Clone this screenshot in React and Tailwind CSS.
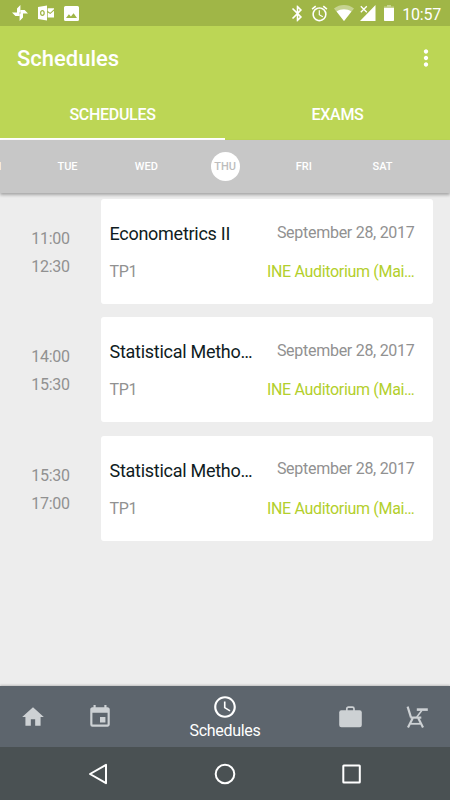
import React, { useState } from "react";
import {
  MdAccessTime,
  MdAlarm,
  MdBluetooth,
  MdEvent,
  MdHome,
  MdMoreVert,
} from "react-icons/md";

const days = ["MON", "TUE", "WED", "THU", "FRI", "SAT"];

const classes = [
  {
    id: 1,
    start: "11:00",
    end: "12:30",
    name: "Econometrics II",
    date: "September 28, 2017",
    type: "TP1",
    room: "INE Auditorium (Mai…",
  },
  {
    id: 2,
    start: "14:00",
    end: "15:30",
    name: "Statistical Metho…",
    date: "September 28, 2017",
    type: "TP1",
    room: "INE Auditorium (Mai…",
  },
  {
    id: 3,
    start: "15:30",
    end: "17:00",
    name: "Statistical Metho…",
    date: "September 28, 2017",
    type: "TP1",
    room: "INE Auditorium (Mai…",
  },
];

function PinwheelIcon() {
  return (
    <svg width="16" height="16" viewBox="0 0 16 16" fill="currentColor">
      <path d="M8.400 0v7.400H5V3.400zM16 8.400H8.600V5h4zM7.600 16V8.600H11v4zM0 7.600h7.400V11h-4z" />
    </svg>
  );
}

function OutlookIcon() {
  return (
    <svg width="16" height="16" viewBox="0 0 16 16" fill="currentColor">
      <path
        fillRule="evenodd"
        d="M0 1.900L9 .4v15.200L0 14.100zM4.400 4.900C2.900 4.900 2 6.200 2 8s.9 3.100 2.400 3.100S6.800 9.800 6.800 8 5.900 4.900 4.400 4.900zm0 1.400c.7 0 1.100.7 1.100 1.700s-.4 1.700-1.100 1.700S3.300 9 3.300 8s.4-1.700 1.100-1.700z"
      />
      <path d="M9.700 3.300H16v1l-3.800 3.500-2.500-1.700zM9.700 7.400l2.600 1.700L16 5.800v6.700H9.700z" />
    </svg>
  );
}

function PictureIcon() {
  return (
    <svg width="15" height="15" viewBox="0 0 15 15" fill="currentColor">
      <path
        fillRule="evenodd"
        d="M1.500 0h12A1.500 1.500 0 0 1 15 1.500v12a1.500 1.500 0 0 1-1.500 1.500h-12A1.500 1.500 0 0 1 0 13.500v-12A1.500 1.500 0 0 1 1.500 0zM2 12h11L9.600 7.200 6.900 10.500 4.900 8.300z"
      />
    </svg>
  );
}

function WifiIcon() {
  return (
    <svg width="20" height="16" viewBox="0 0 20 16" fill="currentColor">
      <path opacity=".4" d="M10 16L0 3.400C3 1.200 6.400 0 10 0s7 1.200 10 3.400z" />
      <path d="M10 16L2.600 6.600C4.800 5 7.300 4.200 10 4.200s5.200.8 7.400 2.400z" />
    </svg>
  );
}

function SignalIcon() {
  return (
    <svg width="16" height="16" viewBox="0 0 16 16">
      <path fill="currentColor" d="M15.500 0v16H0l7.800-8z" />
      <path stroke="currentColor" strokeWidth="1.300" d="M.8 1.200l6 6M6.800 1.200l-6 6" />
    </svg>
  );
}

function BatteryIcon() {
  return (
    <svg width="10" height="16" viewBox="0 0 10 16" fill="currentColor">
      <path opacity=".4" d="M3 0h4v1.500h3V4H0V1.500h3z" />
      <path d="M0 3h10v12.200a.8.8 0 0 1-.8.8H.8a.8.8 0 0 1-.8-.8z" />
    </svg>
  );
}

function BriefcaseIcon() {
  return (
    <svg width="24" height="22" viewBox="0 0 24 22">
      <rect x="1.200" y="4.200" width="22.600" height="17" rx="2.200" fill="currentColor" />
      <path
        d="M8.800 5V2.800A1.600 1.600 0 0 1 10.400 1.200h4A1.600 1.600 0 0 1 16 2.800V5"
        fill="none"
        stroke="currentColor"
        strokeWidth="1.700"
      />
    </svg>
  );
}

function DeskIcon() {
  return (
    <svg width="22" height="22" viewBox="0 0 22 22" fill="none" stroke="currentColor">
      <path strokeWidth="2.200" d="M1.600.7L5 11.500" />
      <path strokeWidth="2.200" d="M4.500 11.600h10.800" />
      <path strokeWidth="2.600" d="M10.800 3.600h11" />
      <path strokeWidth="1.500" d="M15.800 4.500l-5 6.500" />
      <path strokeWidth="2.200" d="M6.800 12L2 21.400M12.200 12L17 21.400" />
      <path strokeWidth="1.800" d="M4.500 17.800h10" />
    </svg>
  );
}

const navItems = [
  { id: "home", label: "Home", icon: <MdHome size={26} /> },
  { id: "calendar", label: "Calendar", icon: <MdEvent size={26} /> },
  { id: "schedules", label: "Schedules", icon: <MdAccessTime size={26} /> },
  { id: "work", label: "Work", icon: <BriefcaseIcon /> },
  { id: "rooms", label: "Rooms", icon: <DeskIcon /> },
];

function StatusBar() {
  return (
    <div className="flex h-[26px] items-center justify-between bg-[#a0b647] pr-[9px] pl-3">
      <div className="flex items-center gap-[10px]">
        <PinwheelIcon />
        <OutlookIcon />
        <PictureIcon />
      </div>
      <div className="flex items-center">
        <MdBluetooth size={19} className="mr-[3px]" />
        <MdAlarm size={19} className="mr-[5px]" />
        <WifiIcon />
        <span className="w-[6px]" />
        <SignalIcon />
        <span className="w-[8px]" />
        <BatteryIcon />
        <span className="ml-[8px] pt-[3px] text-base tracking-[-0.2px]">10:57</span>
      </div>
    </div>
  );
}

function ClassRow({ item }) {
  return (
    <div className="flex h-[105px]">
      <div className="flex w-[101px] flex-col items-center pt-[26px] text-base leading-7 tracking-[-0.25px] text-[#919191]">
        <span>{item.start}</span>
        <span>{item.end}</span>
      </div>
      <div className="flex w-[331.500px] flex-col rounded-[3px] bg-white pt-[21px] pr-[18px] pl-[8.500px]">
        <div className="flex items-center justify-between">
          <h3 className="text-lg leading-7 tracking-[-0.270px] text-[#0f1c22]">{item.name}</h3>
          <span className="pb-[3px] text-base tracking-[-0.280px] text-[#919191]">{item.date}</span>
        </div>
        <div className="mt-3 flex items-center justify-between text-base tracking-[-0.320px]">
          <span className="text-[#919191]">{item.type}</span>
          <span className="text-[#b3cf2c]">{item.room}</span>
        </div>
      </div>
    </div>
  );
}

export default function App() {
  const [tab, setTab] = useState("SCHEDULES");
  const [day, setDay] = useState("THU");
  const [page, setPage] = useState("schedules");

  return (
    <div className="flex h-[800px] w-[450px] flex-col overflow-hidden bg-[#ededed] font-['Roboto',sans-serif]">
      <header className="shrink-0 bg-[#bcd655] text-white">
        <StatusBar />
        <div className="flex h-16 items-center justify-between pr-[11px] pl-[17px]">
          <h1 className="text-[22px] font-medium">Schedules</h1>
          <MdMoreVert size={26} />
        </div>
        <div className="flex h-[50px]">
          {["SCHEDULES", "EXAMS"].map((name) => (
            <button
              key={name}
              type="button"
              onClick={() => setTab(name)}
              className={`w-1/2 border-b-2 pt-px text-base font-medium tracking-[-0.3px] ${
                tab === name ? "border-white" : "border-transparent"
              }`}
            >
              {name}
            </button>
          ))}
        </div>
      </header>

      <div className="flex h-[53px] shrink-0 items-center bg-[#c7c7c7] shadow-[0_2px_3px_rgba(0,0,0,0.3)]">
        {days.map((name) => (
          <div key={name} className="flex w-[78.750px] shrink-0 justify-center first:-ml-[50.600px]">
            <button
              type="button"
              onClick={() => setDay(name)}
              className={`size-[29px] rounded-full pt-[2px] text-[11px] font-medium ${
                day === name ? "bg-white text-[#bdbdbd]" : "text-white"
              }`}
            >
              {name}
            </button>
          </div>
        ))}
      </div>

      <main className="flex flex-1 flex-col gap-[13.400px] pt-[6px]">
        {classes.map((item) => (
          <ClassRow key={item.id} item={item} />
        ))}
      </main>

      <nav className="flex h-[61px] shrink-0 bg-[#5d656d] shadow-[0_-1px_2px_rgba(0,0,0,0.2)]">
        {navItems.map((item) => (
          <button
            key={item.id}
            type="button"
            aria-label={item.label}
            onClick={() => setPage(item.id)}
            className={`flex flex-col items-center justify-center ${
              page === item.id ? "flex-1 pt-[3px] text-white" : "w-[66.500px] text-[#cdd1d4]"
            }`}
          >
            {item.icon}
            {page === item.id && (
              <span className="text-base leading-[22px] tracking-[-0.3px]">{item.label}</span>
            )}
          </button>
        ))}
      </nav>

      <div className="flex h-[53px] shrink-0 items-center justify-center gap-[105px] bg-[#4a5153] text-white">
        <svg width="22" height="22" viewBox="0 0 22 22" fill="none" stroke="currentColor" strokeWidth="2">
          <path strokeLinejoin="round" d="M19 1.800v18.400L3 11z" />
        </svg>
        <svg width="22" height="22" viewBox="0 0 22 22" fill="none" stroke="currentColor" strokeWidth="2">
          <circle cx="11" cy="11" r="9.300" />
        </svg>
        <svg width="22" height="22" viewBox="0 0 22 22" fill="none" stroke="currentColor" strokeWidth="2">
          <rect x="2.300" y="2.500" width="16.500" height="17" rx=".5" />
        </svg>
      </div>
    </div>
  );
}
